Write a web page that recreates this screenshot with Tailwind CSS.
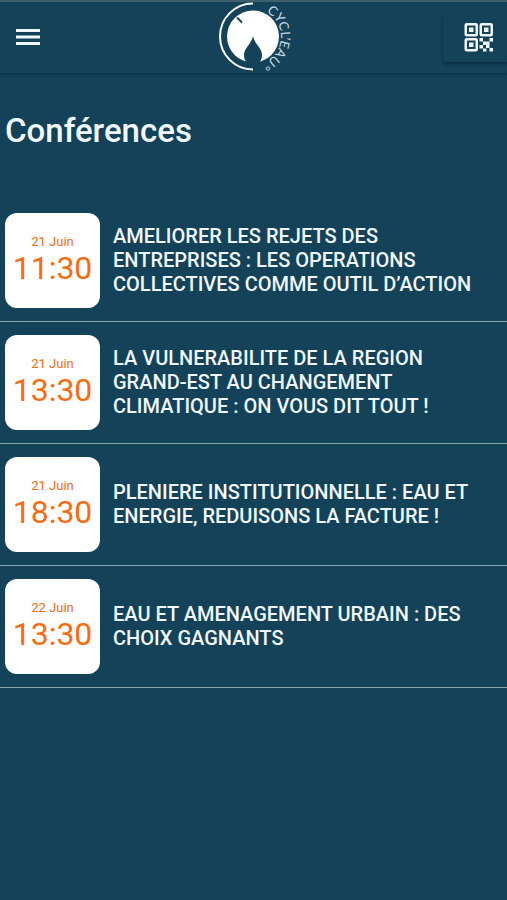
<!DOCTYPE html>
<html lang="fr">

<head>
	<meta charset="UTF-8">
	<meta name="viewport" content="width=device-width, initial-scale=1.0">
	<title>Cycl'Eau - Conférences</title>
	<script src="https://cdn.jsdelivr.net/npm/@tailwindcss/browser@4"></script>
</head>

<body class="bg-[#134259] min-h-screen text-[#f1f8ff] font-[Roboto,sans-serif]">
	<header class="grid grid-cols-[1fr_auto_1fr] items-center h-[73px] border-t-2 border-[#3f606f] shadow-[0_1px_3px_rgba(0,20,35,0.5)]">
		<button type="button" aria-label="Menu" class="justify-self-start ml-3 p-1">
			<svg class="block w-6 h-6" viewBox="0 0 24 24" fill="currentColor">
				<path d="M0 3h24v3H0zM0 9.500h24v3H0zM0 16h24v3H0z" />
			</svg>
		</button>

		<a href="#" aria-label="Cycl'Eau">
			<svg class="block w-[88px] h-[71px] overflow-visible" viewBox="0 0 88 71">
				<path d="M43 1.500A33 33 0 0 0 43 67.500" fill="none" stroke="#fff" stroke-width="2" />
				<circle cx="43" cy="34.500" r="26" fill="#fff" />
				<path d="M27 15.500l5 5" stroke="#134259" stroke-width="2" />
				<path d="M43 34C44.500 42 52 46 52 53C52 57 50.500 59 49 61L43 64L37 61C35.500 59 34 57 34 53C34 46 41.500 42 43 34z" fill="#134259" />
				<path id="ring" d="M43 6.500A28 28 0 0 1 43 62.500A28 28 0 0 1 30 59" fill="none" />
				<text class="font-[Lato,sans-serif] text-[13px]" fill="#c9dce8"><textPath href="#ring" startOffset="14">CYCL’EAU°</textPath></text>
			</svg>
		</a>

		<button type="button" aria-label="Scanner un QR code" class="justify-self-end pl-5 pr-3 py-2 rounded-l shadow-[0_2px_3px_rgba(0,20,35,0.5)]">
			<svg class="block w-8 h-8" viewBox="0 0 32 32">
				<g fill="none" stroke="#f1f8ff" stroke-width="2.500">
					<rect x="2.750" y="2.250" width="11" height="11" rx="1" />
					<rect x="17.750" y="2.250" width="11" height="11" rx="1" />
					<rect x="2.750" y="17.250" width="11" height="11" rx="1" />
				</g>
				<path fill="#f1f8ff" d="M6 5.500h4.500v4.500H6zM21 5.500h4.500v4.500H21zM6 20.500h4.500v4.500H6zM16.500 16H20v3.500h-3.500zM26.500 16H30v3.500h-3.500zM20 19.500h6.500V26H23v-3h-3zM16.500 23H20v3.500h-3.500zM20 26.500h3.500v3H20zM26.500 26H30v3.500h-3.500z" />
			</svg>
		</button>
	</header>

	<main>
		<h1 class="px-[5px] pt-[38px] pb-[49px] text-[33px] leading-10 font-medium">Conférences</h1>

		<ul class="text-xl leading-6 font-medium">
			<li class="flex items-center gap-[13px] pl-[5px] pr-4 py-[13px] border-b border-[#8aa5b0]">
				<time datetime="06-21T11:30" class="flex flex-col items-center justify-center shrink-0 w-[95px] h-[95px] pb-0.5 rounded-xl bg-white text-[#fb6a0d] font-normal">
					<span class="text-[13px] leading-4">21 Juin</span>
					<span class="text-[32px] leading-9">11:30</span>
				</time>
				<h2 class="pb-0.5">AMELIORER LES REJETS DES ENTREPRISES : LES OPERATIONS COLLECTIVES COMME OUTIL D’ACTION</h2>
			</li>
			<li class="flex items-center gap-[13px] pl-[5px] pr-4 py-[13px] border-b border-[#8aa5b0]">
				<time datetime="06-21T13:30" class="flex flex-col items-center justify-center shrink-0 w-[95px] h-[95px] pb-0.5 rounded-xl bg-white text-[#fb6a0d] font-normal">
					<span class="text-[13px] leading-4">21 Juin</span>
					<span class="text-[32px] leading-9">13:30</span>
				</time>
				<h2 class="pb-0.5">LA VULNERABILITE DE LA REGION GRAND-EST AU CHANGEMENT CLIMATIQUE : ON VOUS DIT TOUT !</h2>
			</li>
			<li class="flex items-center gap-[13px] pl-[5px] pr-4 py-[13px] border-b border-[#8aa5b0]">
				<time datetime="06-21T18:30" class="flex flex-col items-center justify-center shrink-0 w-[95px] h-[95px] pb-0.5 rounded-xl bg-white text-[#fb6a0d] font-normal">
					<span class="text-[13px] leading-4">21 Juin</span>
					<span class="text-[32px] leading-9">18:30</span>
				</time>
				<h2 class="pb-0.5">PLENIERE INSTITUTIONNELLE : EAU ET ENERGIE, REDUISONS LA FACTURE !</h2>
			</li>
			<li class="flex items-center gap-[13px] pl-[5px] pr-4 py-[13px] border-b border-[#8aa5b0]">
				<time datetime="06-22T13:30" class="flex flex-col items-center justify-center shrink-0 w-[95px] h-[95px] pb-0.5 rounded-xl bg-white text-[#fb6a0d] font-normal">
					<span class="text-[13px] leading-4">22 Juin</span>
					<span class="text-[32px] leading-9">13:30</span>
				</time>
				<h2 class="pb-0.5">EAU ET AMENAGEMENT URBAIN : DES CHOIX GAGNANTS</h2>
			</li>
		</ul>
	</main>
</body>

</html>
